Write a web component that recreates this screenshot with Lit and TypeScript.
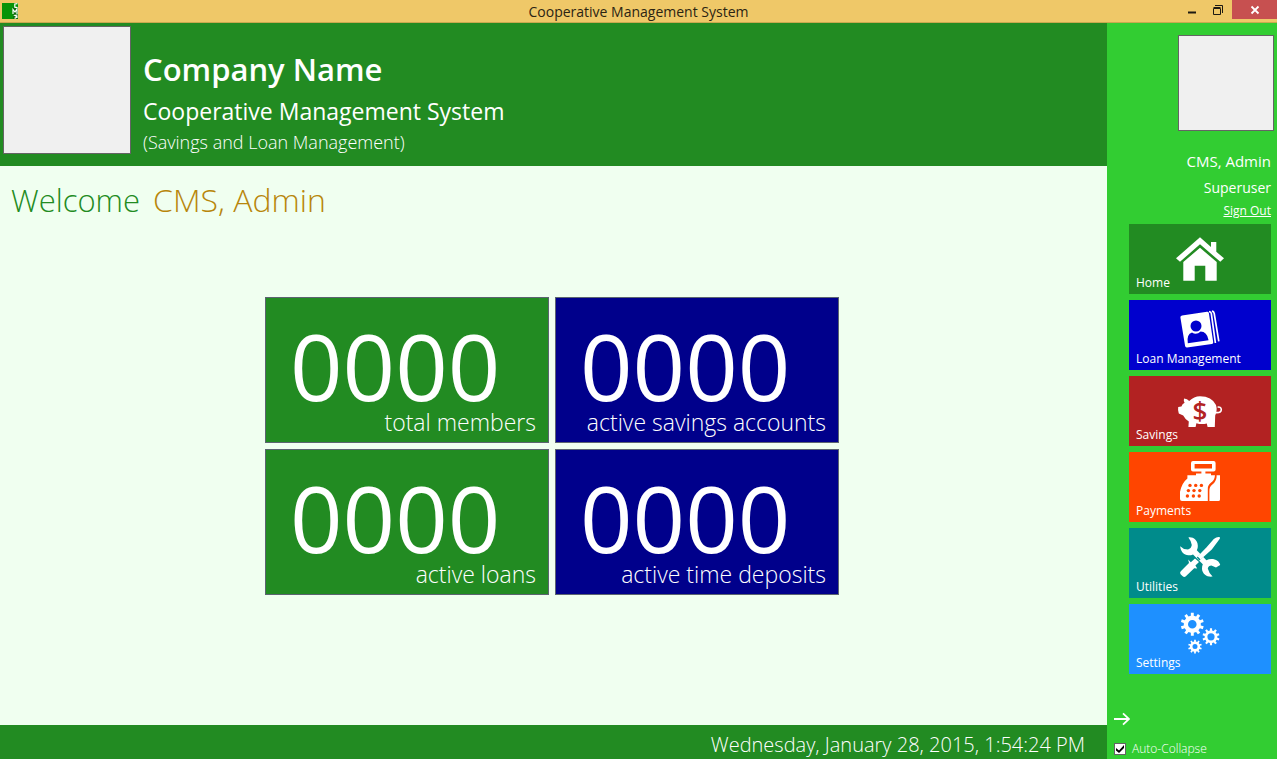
import { LitElement, html, css, svg } from "lit";
import { customElement, property, state } from "lit/decorators.js";

/* Outline of a cog wheel: alternating tooth and root points, plus the hole. */
function gear(cx: number, cy: number, r: number, hole: number, teeth: number): string {
  const root = r * 0.74;
  const step = (Math.PI * 2) / teeth;
  const pts: string[] = [];
  const at = (radius: number, angle: number) =>
    `${(cx + radius * Math.cos(angle)).toFixed(2)} ${(cy + radius * Math.sin(angle)).toFixed(2)}`;
  for (let i = 0; i < teeth; i++) {
    const a = i * step - Math.PI / 2;
    pts.push(at(root, a - step * 0.27), at(r, a - step * 0.2), at(r, a + step * 0.2), at(root, a + step * 0.27));
  }
  return (
    `M${pts.join("L")}Z` +
    `M${cx - hole} ${cy}a${hole} ${hole} 0 1 0 ${hole * 2} 0a${hole} ${hole} 0 1 0 ${-hole * 2} 0Z`
  );
}

const icons: Record<string, unknown> = {
  home: svg`
    <path d="M24 4.3L35 14V9H40.3V18.8L48 25.3L44.3 28.8L24 11.3L4 28.8L0 25.3Z"/>
    <path d="M24 14.8L40.7 29V47.7H29.3V32.7H18.7V47.7H7.3V29Z"/>`,
  loan: svg`
    <path d="M6 6.4L31 2.8Q32.6 2.6 32.9 4.2L37.2 33.2Q37.4 34.8 35.8 35L11 38.4Q9.4 38.6 9.1 37L4.4 8.4Q4.2 6.7 6 6.4Z"/>
    <path d="M33 2.6Q35 2.6 35.3 4.4L39.4 34M36 2.2Q37.8 2.4 38.2 4.4L42.8 32.4" fill="none" stroke="#fff" stroke-width="1.7"/>
    <g class="cut">
      <circle cx="20" cy="17" r="5.5"/>
      <path d="M11.8 34.2Q10.4 25.4 16 23.6Q20.4 26.4 24.6 22.6Q31 22.6 32.6 31.2Z"/>
    </g>`,
  savings: svg`
    <path d="M8 13.4Q11.4 13.6 13.2 16Q18 11.4 24 11.2Q35.8 11.2 40 20Q41.6 25.4 39.2 30.6L38.8 42H31.6L30.8 38.4Q25.6 39.8 20.4 38.2L19.6 42H12.4L12.8 36.6Q9 34.2 7.2 30.6L2.8 28.4Q1.6 25.6 2.2 22L5.4 21.4Q6.2 19 8.6 17.8Q7.4 15.4 8 13.4Z"/>
    <path d="M40 27.6Q45.6 28 45.3 24.4Q44.8 21.4 41.6 22.2" fill="none" stroke="#fff" stroke-width="1.6"/>
    <text class="cut sign" x="24" y="35" text-anchor="middle">$</text>`,
  payments: svg`
    <path fill-rule="evenodd" d="M17 0H37.6Q39.6 0 39.6 2V8.4Q39.6 10.4 37.6 10.4H17Q15 10.4 15 8.4V2Q15 0 17 0ZM18.6 3V7.4H36V3Z"/>
    <path d="M25.4 10H29.4V12.4H35V14.2H39Q38.6 19.4 34.6 22Q31.6 24.4 31.8 28V40H6Q4 40 4 38V31Q5.6 22 11.4 17.4V14.2H20V12.4H25.4Z"/>
    <path d="M40.6 14.2H44V38.4Q44 40 42.4 40H33.4V30Q33.2 26 36.4 23.6Q40.2 20.4 40.6 16Z"/>
    <g class="cut">
      ${[
        [14, 24.4], [19.7, 24.4], [25.4, 24.4],
        [12.4, 29.6], [18, 29.6], [23.8, 29.6],
        [11.4, 35], [17.4, 35], [23.2, 35],
      ].map(([x, y]) => svg`<circle cx=${x} cy=${y} r="1.7"/>`)}
    </g>`,
  utilities: svg`
    <path d="M12.4 .4C17 -.4 21.6 3 21.8 8.4C21.9 10.4 21.4 12 20.8 13.2L30.4 23.2C32 22.4 33.8 22 35.4 22C40 22 43.6 24.6 44.2 28L40 30.4L35.4 28.6Q32.4 28.6 31.8 31.6L33.6 36L36.6 39.6C31 40.4 26.4 37 26 32C25.9 30.2 26.2 28.6 26.8 27.2L17 17.4C15.4 18.2 14 18.4 12.4 18.3C8 18 4.4 14.4 4.2 9.2L8 12L12 12.4Q15.2 11.6 15.8 8L14.6 4Z"/>
    <path class="cut" d="M20.8 20.6L23.4 23.4L29.6 17.2L27 14.4Z"/>
    <path d="M43.4 0Q44.4 .6 43.8 1.8L35.8 12.4L24.6 22.6L21.6 19.6L30.6 10.2L37.8 2Q40.8 -.4 43.4 0Z"/>
    <path d="M12.2 22.6L14.8 25.2L19 21.4L23 25L19.4 28.6L21.2 31.4L18.2 31.2L9.6 39.6Q8 40.6 6.4 39L4.6 37.2Q3.4 35.6 4.8 34.2L13 26Z"/>`,
  settings: svg`
    <path fill-rule="evenodd" d=${gear(16.3, 11.2, 11.6, 4.3, 10)}/>
    <path fill-rule="evenodd" d=${gear(35, 23.8, 8.6, 3.6, 10)}/>
    <path fill-rule="evenodd" d=${gear(19, 33.6, 6.9, 2.5, 10)}/>`,
};

@customElement("menu-tile")
class MenuTile extends LitElement {
  @property() label = "";
  @property() icon = "home";

  static styles = css`
    :host { display: block; }
    button {
      display: grid;
      width: 100%;
      height: 70px;
      padding: 0;
      border: 0;
      color: #fff;
      font: 400 12px/18px "Open Sans", "Noto Sans", sans-serif;
      text-align: left;
      cursor: pointer;
    }
    .icon, .label { grid-area: 1 / 1; }
    .icon { justify-self: center; align-self: center; fill: #fff; overflow: visible; }
    .label { align-self: end; padding: 0 7px 2px; }
    .sign { font: 600 26px "Open Sans", sans-serif; }
    .home { background: #228b22; }
    .loan { background: #0000cd; }
    .savings { background: #b22222; }
    .payments { background: #ff4500; }
    .utilities { background: #008b8b; }
    .settings { background: #1e90ff; }
    .loan .cut { fill: #0000cd; }
    .savings .cut { fill: #b22222; }
    .payments .cut { fill: #ff4500; }
    .utilities .cut { fill: #008b8b; }
  `;

  render() {
    return html`<button type="button" class=${this.icon}>
      <svg class="icon" width="48" height="52" viewBox="0 0 48 52" aria-hidden="true">${icons[this.icon]}</svg>
      <span class="label">${this.label}</span>
    </button>`;
  }
}

@customElement("stat-tile")
class StatTile extends LitElement {
  @property() value = "0000";
  @property() label = "";
  @property() tone = "green";

  static styles = css`
    :host { display: block; }
    .tile {
      box-sizing: border-box;
      height: 146px;
      padding: 28px 12px 0 24px;
      border: 1px solid #5b6470;
      color: #fff;
    }
    .green { background: #228b22; }
    .blue { background: #00008b; }
    .value { font-size: 92px; line-height: 80px; }
    .label { font-size: 23px; font-weight: 300; line-height: 32px; text-align: right; white-space: nowrap; }
  `;

  render() {
    return html`<div class="tile ${this.tone}">
      <div class="value">${this.value}</div>
      <div class="label">${this.label}</div>
    </div>`;
  }
}

@customElement("app-root")
class AppRoot extends LitElement {
  @state() private autoCollapse = true;

  static styles = css`
    :host {
      display: flex;
      flex-direction: column;
      min-height: 100vh;
      font-family: "Open Sans", "Noto Sans", sans-serif;
      color: #fff;
    }
    button { padding: 0; border: 0; background: none; color: inherit; font: inherit; cursor: pointer; }
    svg { display: block; }
    .titlebar {
      display: grid;
      grid-template-columns: 1fr auto 1fr;
      height: 22px;
      border-bottom: 1px solid #c9a94f;
      background: #efc868;
      color: #2b2413;
    }
    .appicon { padding: 3px 2px; }
    .title { margin: 0; font-size: 14px; font-weight: 400; line-height: 23px; }
    .controls { display: flex; justify-content: flex-end; align-items: flex-start; }
    .control { display: grid; place-items: center; width: 26px; height: 19px; padding-right: 2px; }
    .close { width: 45px; padding: 0; background: #c75050; }
    .body { display: grid; grid-template-columns: minmax(0, 1fr) 170px; flex: 1; }
    .content { display: flex; flex-direction: column; background: #f0fff0; }
    .banner { display: flex; gap: 12px; box-sizing: border-box; height: 143px; padding: 3px; background: #228b22; }
    .logo { box-sizing: border-box; width: 128px; height: 128px; border: 1px solid #646464; background: #f0f0f0; }
    .company { margin: 0; padding-top: 21px; font-size: 31px; font-weight: 600; line-height: 44px; }
    .product { margin: 0; font-size: 23px; font-weight: 400; line-height: 40px; }
    .tagline { margin: 0; font-size: 18px; font-weight: 300; line-height: 22px; }
    .main { display: grid; grid-template-rows: 1fr auto 1fr; flex: 1; }
    .welcome { margin: 0; padding: 12px 11px; color: #228b22; font-size: 31px; font-weight: 300; line-height: 44px; }
    .user { padding-left: 5px; color: #b8860b; font-size: 32px; }
    .stats { display: grid; grid-template-columns: 284px 284px; gap: 6px; justify-content: center; padding-right: 3px; }
    .status { padding: 5px 22px 0 0; background: #228b22; font-size: 20px; font-weight: 300; line-height: 29px; text-align: right; }
    .side { display: flex; flex-direction: column; align-items: flex-end; background: #32cd32; }
    .photo { box-sizing: border-box; width: 96px; height: 96px; margin: 12px 3px 17px; border: 1px solid #646464; background: #f0f0f0; }
    .name, .role, .signout { padding-right: 6px; }
    .name { font-size: 15px; line-height: 27px; }
    .role { font-size: 14px; line-height: 25px; }
    .signout { color: #fff; font-size: 12px; line-height: 22px; }
    .menu { display: grid; gap: 6px; width: 142px; padding: 2px 6px 0 0; }
    .foot { display: grid; gap: 14px; align-self: stretch; margin-top: auto; padding: 0 7px 1px; }
    .arrow { justify-self: start; }
    .collapse { display: flex; align-items: center; gap: 6px; font-size: 12px; font-weight: 300; line-height: 18px; }
    .check {
      appearance: none;
      display: grid;
      place-items: center;
      box-sizing: border-box;
      width: 12px;
      height: 12px;
      margin: 0;
      border: 1px solid #646464;
      background: #fff;
    }
    .check:checked::before {
      content: "";
      width: 8px;
      height: 8px;
      background: #000;
      clip-path: polygon(0 38%, 38% 68%, 100% 0, 100% 38%, 38% 100%, 0 70%);
    }
  `;

  render() {
    return html`
      <header class="titlebar">
        <svg class="appicon" width="16" height="16" viewBox="0 0 16 16" aria-hidden="true">
          <path d="M0 0H16V16H0Z" fill="#089408"/>
          <path d="M11 4H16V16H11Z" fill="#0b6f0b"/>
          <path d="M15.5 .7L12.8 1V4.2L15.5 4.6M11 11V6.5L13 9L15 6V11M15.6 12L12.8 12.4L15.4 14L12.6 15.4" fill="none" stroke="#fff" stroke-width="1.2"/>
        </svg>
        <h1 class="title">Cooperative Management System</h1>
        <div class="controls">
          <button class="control" type="button" aria-label="Minimize">
            <svg width="10" height="10" viewBox="0 0 10 10"><path d="M1 6.5H9V8.5H1Z" fill="#1d1a12"/></svg>
          </button>
          <button class="control" type="button" aria-label="Restore">
            <svg width="10" height="10" viewBox="0 0 10 10" fill="none" stroke="#1d1a12">
              <path d="M.5 3.5H7.5V9.5H.5ZM.5 2.5H7.5M2 .5H9.5V8"/>
            </svg>
          </button>
          <button class="control close" type="button" aria-label="Close">
            <svg width="10" height="10" viewBox="0 0 10 10"><path d="M1.5 1.5L8.5 8.5M8.5 1.5L1.5 8.5" stroke="#fff" stroke-width="1.8"/></svg>
          </button>
        </div>
      </header>
      <div class="body">
        <div class="content">
          <header class="banner">
            <div class="logo"></div>
            <div>
              <h2 class="company">Company Name</h2>
              <p class="product">Cooperative Management System</p>
              <p class="tagline">(Savings and Loan Management)</p>
            </div>
          </header>
          <main class="main">
            <h2 class="welcome">Welcome <span class="user">CMS, Admin</span></h2>
            <section class="stats">
              <stat-tile label="total members" tone="green"></stat-tile>
              <stat-tile label="active savings accounts" tone="blue"></stat-tile>
              <stat-tile label="active loans" tone="green"></stat-tile>
              <stat-tile label="active time deposits" tone="blue"></stat-tile>
            </section>
          </main>
          <footer class="status"><time datetime="2015-01-28T13:54:24">Wednesday, January 28, 2015, 1:54:24 PM</time></footer>
        </div>
        <aside class="side">
          <div class="photo"></div>
          <div class="name">CMS, Admin</div>
          <div class="role">Superuser</div>
          <a class="signout" href="#">Sign Out</a>
          <nav class="menu">
            <menu-tile icon="home" label="Home"></menu-tile>
            <menu-tile icon="loan" label="Loan Management"></menu-tile>
            <menu-tile icon="savings" label="Savings"></menu-tile>
            <menu-tile icon="payments" label="Payments"></menu-tile>
            <menu-tile icon="utilities" label="Utilities"></menu-tile>
            <menu-tile icon="settings" label="Settings"></menu-tile>
          </nav>
          <div class="foot">
            <button class="arrow" type="button" aria-label="Collapse the side bar">
              <svg width="16" height="14" viewBox="0 0 16 14" fill="none" stroke="#fff" stroke-width="1.8">
                <path d="M0 7H15M9 1.4L15 7L9 12.6"/>
              </svg>
            </button>
            <label class="collapse">
              <input class="check" type="checkbox" .checked=${this.autoCollapse}
                @change=${(e: Event) => (this.autoCollapse = (e.target as HTMLInputElement).checked)} />
              Auto-Collapse
            </label>
          </div>
        </aside>
      </div>
    `;
  }
}
